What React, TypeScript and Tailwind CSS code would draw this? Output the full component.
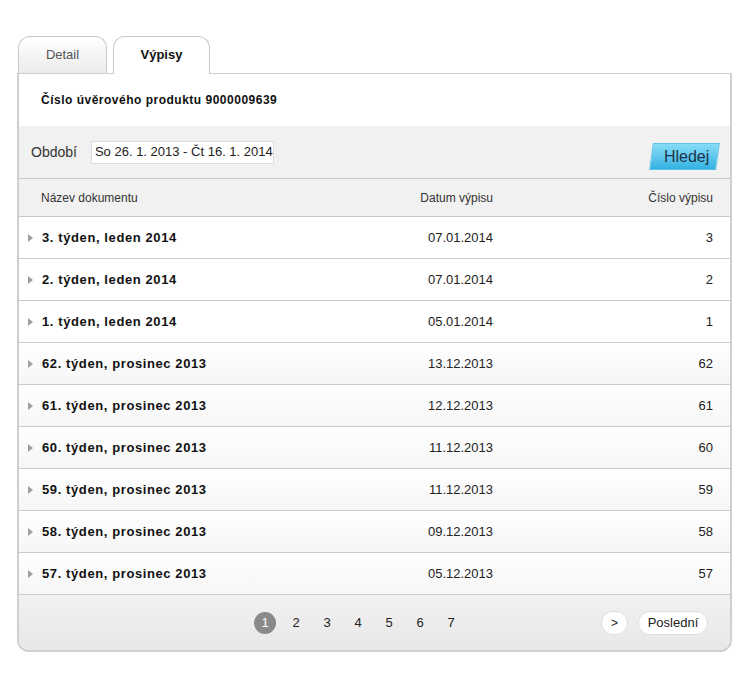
const rows = [
  { name: "3. týden, leden 2014", date: "07.01.2014", no: "3" },
  { name: "2. týden, leden 2014", date: "07.01.2014", no: "2" },
  { name: "1. týden, leden 2014", date: "05.01.2014", no: "1" },
  { name: "62. týden, prosinec 2013", date: "13.12.2013", no: "62" },
  { name: "61. týden, prosinec 2013", date: "12.12.2013", no: "61" },
  { name: "60. týden, prosinec 2013", date: "11.12.2013", no: "60" },
  { name: "59. týden, prosinec 2013", date: "11.12.2013", no: "59" },
  { name: "58. týden, prosinec 2013", date: "09.12.2013", no: "58" },
  { name: "57. týden, prosinec 2013", date: "05.12.2013", no: "57" },
];

const pages = ["1", "2", "3", "4", "5", "6", "7"];

export default function App() {
  return (
    <div className="min-h-[682px] bg-white pt-[36px] pl-[17px] font-['Liberation_Sans',Arial,sans-serif] text-[#222]">
      <div className="w-[715px]">
        {/* tabs */}
        <div className="relative z-10 flex h-[37px] items-end gap-[6px] pl-[1px]">
          <div className="flex h-[37px] w-[89px] items-center justify-center rounded-t-[12px] border border-b-0 border-[#c8c8c8] bg-gradient-to-b from-white to-[#ececec] pb-px text-[13px] text-[#555]">
            Detail
          </div>
          <div className="-mb-px flex h-[38px] w-[97px] items-center justify-center rounded-t-[12px] border border-b-0 border-[#c8c8c8] bg-white pb-[2px] text-[13px] font-bold text-[#111]">
            Výpisy
          </div>
        </div>

        <div className="overflow-hidden rounded-b-[12px] border-x-2 border-b-2 border-t border-[#cfcfcf]">
          <div className="flex h-[52px] items-center bg-white pl-[22px] text-[12px] font-bold tracking-[0.5px] text-[#111]">
            Číslo úvěrového produktu 9000009639
          </div>

          <div className="flex h-[53px] items-center border-b border-[#c8c8c8] bg-[#f1f1f1] pl-[12px] pr-[12px]">
            <span className="text-[14px] text-[#333]">Období</span>
            <div className="ml-[14px] flex h-[23px] w-[183px] items-center border border-[#dcdcdc] bg-white pl-[3px] text-[13px] text-[#222]">
              So 26. 1. 2013 - Čt 16. 1. 2014
            </div>
            <div className="ml-auto mt-[8px] flex h-[27px] w-[67px] -skew-x-[8deg] items-center justify-center border border-[#5cc3e8] bg-gradient-to-b from-[#86dcf7] to-[#30b2e3]">
              <span className="skew-x-[8deg] pl-[4px] text-[16px] text-[#1b3448]">Hledej</span>
            </div>
          </div>

          <div className="flex h-[38px] items-center border-b border-[#c8c8c8] bg-[#f1f1f1] text-[12px] text-[#333]">
            <div className="flex-1 pl-[22px]">Název dokumentu</div>
            <div className="w-[200px] text-right">Datum výpisu</div>
            <div className="w-[237px] pr-[17px] text-right">Číslo výpisu</div>
          </div>

          {rows.map((r, i) => (
            <div
              key={r.no}
              className={
                "flex h-[42px] items-center border-b border-[#cbcbcb] pt-px " +
                (i < 3 ? "bg-white" : "bg-gradient-to-b from-white to-[#f6f6f6]")
              }
            >
              <div className="flex flex-1 items-center pl-[9px]">
                <svg width="5" height="8" viewBox="0 0 5 8" className="mr-[9px]">
                  <path d="M0 0 L5 4 L0 8 Z" fill="#a0a0a0" />
                </svg>
                <span className="text-[13px] font-bold tracking-[0.6px] text-[#111]">{r.name}</span>
              </div>
              <div className="w-[200px] text-right text-[13px] text-[#222]">{r.date}</div>
              <div className="w-[237px] pr-[17px] text-right text-[13px] text-[#222]">{r.no}</div>
            </div>
          ))}

          <div className="flex h-[55px] items-center bg-gradient-to-b from-[#f1f1f1] to-[#e8e8e8] text-[13px]">
            <div className="ml-[235px] flex items-center">
              {pages.map((p) => (
                <div
                  key={p}
                  className={
                    "mr-[9px] flex h-[22px] w-[22px] items-center justify-center " +
                    (p === "1" ? "rounded-full bg-[#8a8a8a] text-white" : "text-[#222]")
                  }
                >
                  {p}
                </div>
              ))}
            </div>
            <div className="ml-auto mr-[22px] flex items-center gap-[10px]">
              <div className="flex h-[24px] w-[27px] items-center justify-center rounded-full border border-[#dedede] bg-white text-[12px] text-[#222]">
                &gt;
              </div>
              <div className="flex h-[24px] w-[70px] items-center justify-center rounded-full border border-[#dedede] bg-white text-[13px] text-[#222]">
                Poslední
              </div>
            </div>
          </div>
        </div>
      </div>
    </div>
  );
}
